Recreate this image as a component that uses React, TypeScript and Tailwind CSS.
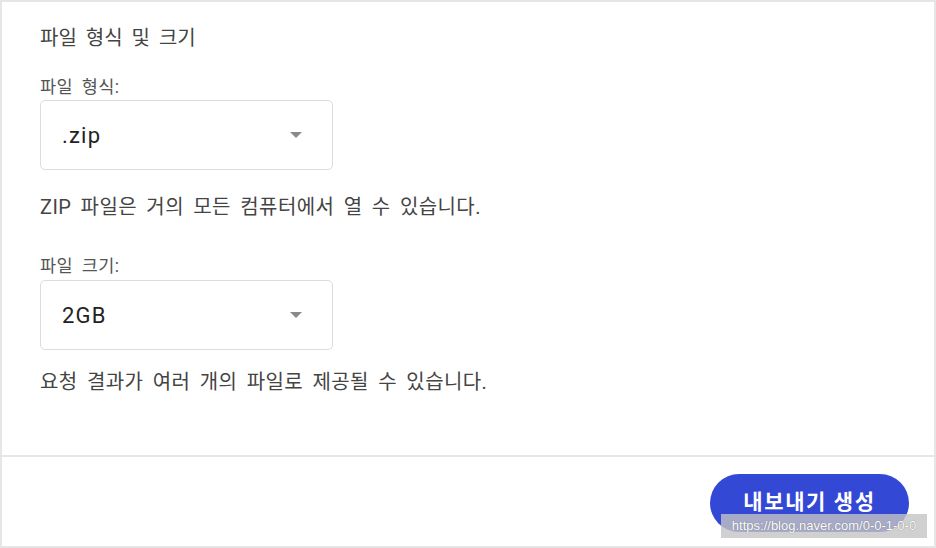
import React from "react";

const font = { fontFamily: "Roboto, 'Noto Sans CJK KR', sans-serif" };

function Select({ value }: { value: string }) {
  return (
    <div className="flex h-[70px] w-[293px] items-center justify-between rounded-[5px] border border-[#dcdcdc] bg-white pl-[21px] pr-[30px]">
      <span className="text-[22px] tracking-[1.2px] text-[#222]">{value}</span>
      <svg width="12" height="6" viewBox="0 0 12 6">
        <path d="M0 0 L12 0 L6 6 Z" fill="#8a8a8a" />
      </svg>
    </div>
  );
}

export default function App() {
  return (
    <div
      className="relative flex h-[548px] w-[936px] flex-col border-2 border-[#e6e6e6] bg-white [word-spacing:4px]"
      style={font}
    >
      <div className="flex h-[453px] flex-col pl-[38px] pt-[24px]">
        <h3 className="text-[20px] leading-[24px] text-[#444]">파일 형식 및 크기</h3>

        <label className="mt-[27px] text-[17.5px] leading-[20px] tracking-[0.4px] text-[#555]">파일 형식:</label>
        <div className="mt-[3px]">
          <Select value=".zip" />
        </div>
        <p className="mt-[25px] text-[20px] leading-[24px] tracking-[0.4px] text-[#444]">
          ZIP 파일은 거의 모든 컴퓨터에서 열 수 있습니다.
        </p>

        <label className="mt-[37px] text-[17.5px] leading-[20px] tracking-[0.4px] text-[#555]">파일 크기:</label>
        <div className="mt-[4px]">
          <Select value="2GB" />
        </div>
        <p className="mt-[20px] text-[20px] leading-[24px] tracking-[0.4px] text-[#444]">
          요청 결과가 여러 개의 파일로 제공될 수 있습니다.
        </p>
      </div>

      <div className="h-[2px] bg-[#e6e6e6]" />

      <div className="flex flex-1 justify-end pr-[25px] pt-[17px]">
        <button className="h-[58px] w-[199px] rounded-full bg-[#3448d6] text-[21px] font-bold tracking-[1.6px] text-white">
          내보내기 생성
        </button>
      </div>

      <div
        className="absolute bottom-[8px] right-[7px] flex h-[24px] w-[206px] items-center justify-center bg-[#c4c4c4]/80 text-[13px] text-white [word-spacing:0] [text-shadow:0_0_1px_#666]"
        style={{ fontFamily: "Arial, 'Liberation Sans', sans-serif" }}
      >
        https://blog.naver.com/0-0-1-0-0
      </div>
    </div>
  );
}
